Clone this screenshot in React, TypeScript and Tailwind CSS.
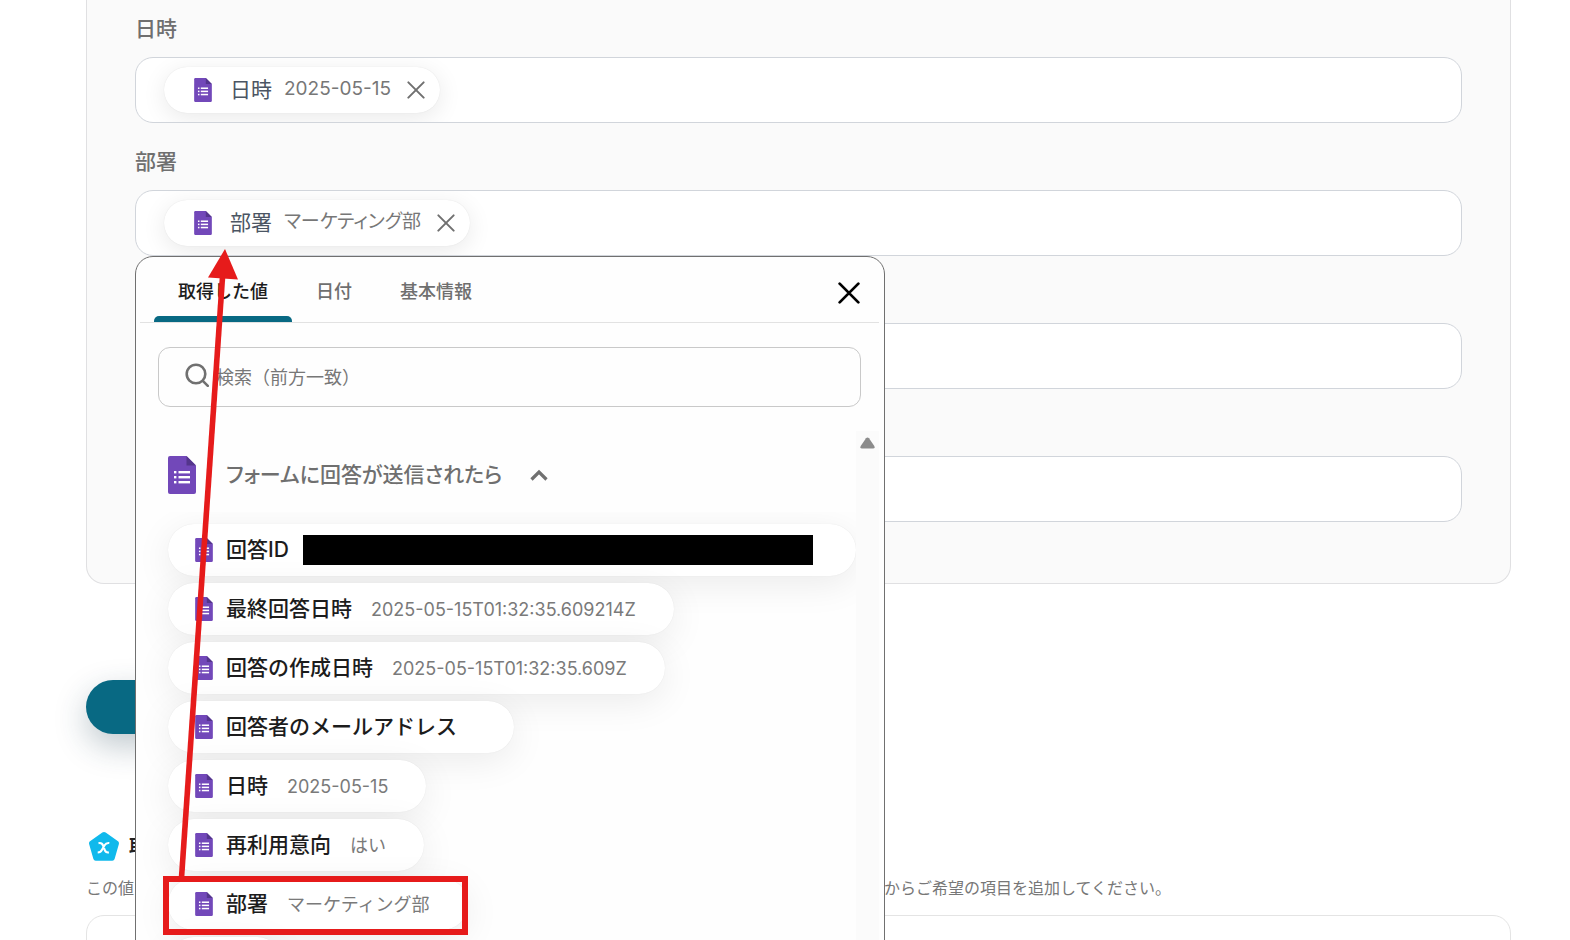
import React from "react";

function FormIcon({ className }: { className: string }) {
  return (
    <svg viewBox="0 0 28 38" className={className} aria-hidden="true">
      <path d="M2 0H18.500L28 9.500V36a2 2 0 0 1-2 2H2a2 2 0 0 1-2-2V2a2 2 0 0 1 2-2Z" fill="#7248b9" />
      <path d="M18.500 0 28 9.500H18.500Z" fill="#54358c" />
      <g fill="#fff">
        <rect x="6" y="15" width="2.400" height="2.400" />
        <rect x="6" y="20" width="2.400" height="2.400" />
        <rect x="6" y="25" width="2.400" height="2.400" />
        <rect x="10.500" y="15" width="11.500" height="2.400" />
        <rect x="10.500" y="20" width="11.500" height="2.400" />
        <rect x="10.500" y="25" width="11.500" height="2.400" />
      </g>
    </svg>
  );
}

function Cross({ className, weight }: { className: string; weight: number }) {
  return (
    <svg viewBox="0 0 20 20" className={className} fill="none" stroke="currentColor" strokeWidth={weight} strokeLinecap="round" aria-hidden="true">
      <path d="M1.500 1.500 18.500 18.500M18.500 1.500 1.500 18.500" />
    </svg>
  );
}

function Token({ title, value }: { title: string; value: string }) {
  return (
    <span className="flex h-[46px] shrink-0 items-center rounded-full bg-white pl-[30px] pr-[15px] shadow-[0_0_1px_rgba(0,0,0,0.12),0_5px_24px_rgba(0,0,0,0.09)]">
      <FormIcon className="h-6 w-[18px]" />
      <span className="ml-[18px] text-[21px] text-[#4b5563]">{title}</span>
      <span className="ml-3 text-[19px] text-[#777] [font-feature-settings:'palt']">{value}</span>
      <button type="button" aria-label={`${title}を削除`} className="ml-4 text-[#707070]">
        <Cross className="size-[18px]" weight={2.2} />
      </button>
    </span>
  );
}

function Field({ id, label, token, children }: { id: string; label?: string; token?: string; children?: React.ReactNode }) {
  return (
    <div className="relative">
      <label htmlFor={id} className="mb-3 block h-8 text-[21px] leading-8 font-medium text-[#6f6f6f]">
        {label}
      </label>
      <div className="flex h-[66px] items-center overflow-hidden rounded-[18px] border border-[#d1d5db] bg-white pb-px pl-7">
        {label && token && <Token title={label} value={token} />}
        <input id={id} aria-label={label ?? "値"} className="h-full min-w-0 flex-1 bg-transparent outline-none" />
      </div>
      {children}
    </div>
  );
}

const values = [
  { title: "最終回答日時", value: "2025-05-15T01:32:35.609214Z" },
  { title: "回答の作成日時", value: "2025-05-15T01:32:35.609Z" },
  { title: "回答者のメールアドレス", value: "" },
  { title: "日時", value: "2025-05-15" },
  { title: "再利用意向", value: "はい" },
  { title: "部署", value: "マーケティング部" },
  { title: "", value: "" },
];

const chip =
  "flex h-[52px] shrink-0 items-center rounded-full bg-white pl-[27px] pr-[38px] text-left shadow-[0_0_1px_rgba(0,0,0,0.1),0_8px_36px_rgba(0,0,0,0.08)]";

function ValuePicker() {
  return (
    <section className="absolute left-0 top-full z-10 flex h-[720px] w-[750px] flex-col rounded-t-[18px] border border-[#707070] bg-[#fefefe] pl-1 pr-[5px]">
      <div className="flex h-[66px] items-stretch border-b border-[#e2e2e2] pl-[14px] pr-[19px]">
        <nav className="flex flex-1 text-[18px] leading-[26px] font-medium text-[#6f6f6f]">
          <button type="button" className="relative px-6 pb-[18px] pt-[22px] text-[#1c1c1c]">
            取得した値
            <span className="absolute inset-x-0 bottom-0 h-[6px] rounded-t-[5px] bg-[#086983]" />
          </button>
          <button type="button" className="px-6 pb-[18px] pt-[22px]">日付</button>
          <button type="button" className="px-6 pb-[18px] pt-[22px]">基本情報</button>
        </nav>
        <button type="button" aria-label="閉じる" className="pt-[7px] text-black">
          <Cross className="size-[22px]" weight={2.5} />
        </button>
      </div>
      <div className="mx-[18px] mt-6 flex h-[60px] shrink-0 items-center rounded-xl border border-[#c9c9c9] pl-[26px]">
        <svg viewBox="0 0 24 24" className="mb-1 size-6 shrink-0" fill="none" stroke="#707070" strokeWidth="2.600" strokeLinecap="round" aria-hidden="true">
          <circle cx="11" cy="11" r="9.300" />
          <path d="m17.800 17.800 5 5" />
        </svg>
        <input aria-label="検索（前方一致）" placeholder="検索（前方一致）" className="ml-[7px] h-full min-w-0 flex-1 bg-transparent text-[18px] text-[#333] outline-none placeholder:text-[#777]" />
      </div>
      <div className="mt-6 flex min-h-0 flex-1">
        <div className="flex min-w-0 flex-1 flex-col overflow-hidden">
          <button type="button" className="flex h-[81px] shrink-0 items-center pl-7 pt-[7px] text-left">
            <FormIcon className="h-[38px] w-7" />
            <span className="ml-[30px] text-[21px] font-medium text-[#6f6f6f] [font-feature-settings:'palt']">フォームに回答が送信されたら</span>
            <svg viewBox="0 0 18 12" className="ml-7 h-3 w-[18px]" fill="none" stroke="#707070" strokeWidth="3.200" aria-hidden="true">
              <path d="M1.500 10.500 9 3l7.500 7.500" />
            </svg>
          </button>
          <div className="flex min-h-0 flex-1 flex-col items-start gap-[7px] overflow-hidden pl-7 pt-3">
            <button type="button" className={`${chip} w-full`}>
              <FormIcon className="h-6 w-[18px] shrink-0" />
              <span className="ml-[13px] shrink-0 text-[21px] font-medium text-[#1c1c1c]">回答ID</span>
              <span className="ml-[14px] mr-[5px] h-[30px] flex-1 bg-black" />
            </button>
            {values.map((item, i) => (
              <button type="button" key={i} className={chip}>
                <FormIcon className="h-6 w-[18px] shrink-0" />
                <span className="ml-[13px] text-[21px] font-medium text-[#1c1c1c]">{item.title}</span>
                <span className="ml-[19px] text-[18px] text-[#7a7a7a]">{item.value}</span>
              </button>
            ))}
          </div>
        </div>
        <div className="w-[23px] shrink-0 bg-[#fbfbfb] pl-1 pt-[6px]">
          <svg viewBox="0 0 15 12" className="h-3 w-[15px]" aria-hidden="true">
            <path d="M6 1.300Q7.500-.3 9 1.300L14.300 9Q15.300 11.500 13 11.500H2Q-.3 11.500.7 9Z" fill="#8b8b8b" />
          </svg>
        </div>
      </div>
    </section>
  );
}

export default function App() {
  return (
    <main className="relative h-screen overflow-hidden bg-white pl-[86px] pr-[59px] font-[Inter,'Noto_Sans_CJK_JP',sans-serif]">
      <section className="flex flex-col gap-[23px] rounded-b-[18px] border border-t-0 border-[#e0e0e2] bg-[#fafafa] px-12 pb-[61px] pt-[13px]">
        <Field id="date" label="日時" token="2025-05-15" />
        <Field id="department" label="部署" token="マーケティング部">
          <ValuePicker />
        </Field>
        <Field id="third" />
        <Field id="fourth" />
      </section>

      <button type="button" aria-label="テストする" className="mt-24 block h-[54px] w-[300px] rounded-full bg-[#086983] shadow-[0_12px_32px_rgba(30,60,80,0.28)]" />

      <section className="mt-[96px]">
        <h2 className="flex h-8 items-center text-[18px] font-bold text-[#222]">
          <svg viewBox="0 0 30 29" className="ml-[3px] mr-[10px] h-[29px] w-[30px]" aria-hidden="true">
            <path d="M13.300.6q1.700-1 3.400 0L29 9.300q1.200.9.900 2.700L25.600 27q-.5 1.700-2.300 1.700H6.700Q4.900 28.700 4.400 27L.1 12q-.4-1.800.9-2.700Z" fill="#10b9ec" />
            <path d="M9.500 11.200q3.400-.8 4.600 2.400l1.600 4.300q1.100 3 4.200 2.500M20.300 11q-3.200-.4-4.700 2.200l-2.600 4.500q-1.400 2.700-4.300 2.800" fill="none" stroke="#fff" strokeWidth="2.100" />
          </svg>
          取得した値
        </h2>
        <p className="flex pt-[14px] text-[16px] leading-6 text-[#777]">
          <span className="w-[798px] shrink-0">この値</span>
          <span>からご希望の項目を追加してください。</span>
        </p>
        <div className="mt-[15px] h-20 rounded-[18px] border border-[#e4e4e4]" />
      </section>

      <svg width="480" height="940" className="pointer-events-none absolute left-0 top-0 z-20" aria-hidden="true">
        <path d="M181.500 878 222.500 277" stroke="#e61b1b" strokeWidth="5.600" />
        <path d="M225 249 238 279.500 208 277.500Z" fill="#e61b1b" />
        <rect x="166" y="879" width="299" height="53" fill="none" stroke="#e61b1b" strokeWidth="6" />
      </svg>
    </main>
  );
}
